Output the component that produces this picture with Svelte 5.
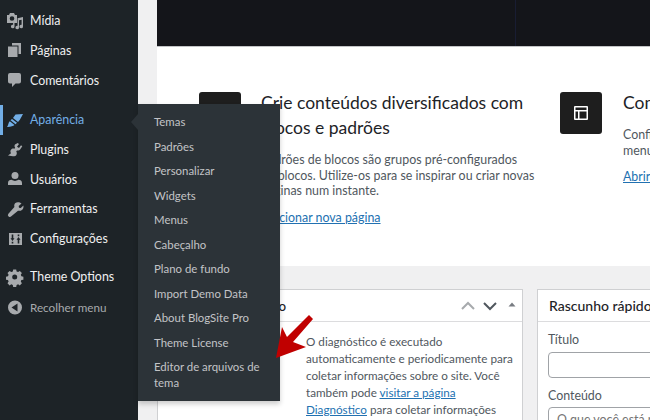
<script>
  const topItems = [
    { label: 'Mídia', icon: 'media' },
    { label: 'Páginas', icon: 'pages' },
    { label: 'Comentários', icon: 'comments' }
  ];
  const midItems = [
    { label: 'Plugins', icon: 'plugins' },
    { label: 'Usuários', icon: 'users' },
    { label: 'Ferramentas', icon: 'tools' },
    { label: 'Configurações', icon: 'settings' }
  ];
  const sub = ['Temas','Padrões','Personalizar','Widgets','Menus','Cabeçalho','Plano de fundo','Import Demo Data','About BlogSite Pro','Theme License','Editor de arquivos de tema'];
</script>

{#snippet icon(name)}
  <svg class="ico" viewBox="0 0 20 20" aria-hidden="true">
    {#if name === 'media'}
      <path fill-rule="evenodd" d="M2 4h2l1-2h4l1 2h2v8H9.500v3.500a1.800 1.800 0 1 1-1.400-1.700V12H2zM7 5.200a2.300 2.300 0 1 0 0 4.600 2.300 2.300 0 0 0 0-4.600z"/>
      <path d="M18 6v9.500a1.800 1.800 0 1 1-1.400-1.700V8.700l-2.600.6v7.200a1.800 1.800 0 1 1-1.400-1.700V7.200z"/>
    {:else if name === 'pages'}
      <path d="M7 2h9v11h-2.500V4.500H7z"/><path d="M3 5.500h9.500V16H3z"/>
    {:else if name === 'comments'}
      <path d="M5 3h9a2 2 0 0 1 2 2v6.500a2 2 0 0 1-2 2h-3.500L7 17v-3.500H5a2 2 0 0 1-2-2V5a2 2 0 0 1 2-2z"/>
    {:else if name === 'brush'}
      <path d="M10.500 4.500l7.500-.5-3 5.500-2 2.500-5-4z"/><path d="M7 9l5 3.800-1.500 1.500-5-4zM4.800 11.200l4.700 3.800C8.300 16 5 17.300 2 17c.8-1 1.200-2.500 1.500-3.500.2-1 .6-1.700 1.300-2.300z"/>
    {:else if name === 'plugins'}
      <path d="M12.700 4l1.300.9-2 2.800 2 1.400 2-2.800 1.300.9-2.200 3.200c-.7 1-2 1.400-3.100 1l-.8 1.100c.9 1.100.8 2.500 0 3.700-.6.800-2 1.200-3.400 1L3 16.500l3-2.300c-.7-1-.8-2.300 0-3.400.7-1 2-1.500 3.400-1l.8-1.100c-.8-.9-.9-2.200-.2-3.200z"/>
    {:else if name === 'users'}
      <circle cx="10" cy="6.500" r="3.500"/><path d="M3 16v-2c0-2 1.500-3.200 3.700-3.200 1 .8 2.200 1.100 3.300 1.100s2.300-.3 3.300-1.100c2.200 0 3.700 1.200 3.700 3.200v2z"/>
    {:else if name === 'tools'}
      <path d="M16.500 4.500l-2.800 2.600.3 1.700 1.800.3 2.600-2.700c.3 1.800-.1 3.300-1.200 4.300-1.200 1.100-2.700 1.400-4.200 1L6.300 17.300a1.900 1.900 0 0 1-2.900-2.500l6-6.900c-.4-1.500-.1-2.900 1-3.900 1.300-1.100 4.400-1 6.100.5z"/>
    {:else if name === 'settings'}
      <path fill-rule="evenodd" d="M4 4h13v12H4zM6.700 5.500v3.800H5.500L7.500 12l2-2.700H8.300V5.500zM6.700 12.800v1.700h1.600v-1.700zM12.700 14.500v-3.800h-1.200l2-2.700 2 2.700h-1.200v3.800zM12.700 5.500v1.700h1.600V5.500z"/>
    {:else if name === 'gear'}
      <path fill-rule="evenodd" d="M8.200 3h3l.4 2 1.500.6 1.700-1.100 2.100 2.100-1.100 1.700.6 1.500 2 .4v3l-2 .4-.6 1.500 1.100 1.700-2.100 2.100-1.700-1.100-1.500.6-.4 2h-3l-.4-2-1.500-.6-1.700 1.100-2.100-2.100 1.100-1.700-.6-1.500-2-.4v-3l2-.4.6-1.500-1.100-1.700 2.100-2.100 1.700 1.100 1.500-.6zM9.700 8a2.500 2.500 0 1 0 0 5 2.500 2.500 0 0 0 0-5z" transform="translate(0 -.500)"/>
    {:else if name === 'collapse'}
      <path fill-rule="evenodd" d="M10 3.500a7 7 0 1 1 0 14 7 7 0 0 1 0-14zM12.500 6.500L6.500 10.500l6 4z"/>
    {/if}
  </svg>
{/snippet}

<div class="screen">
  <aside class="side">
    <nav class="menu">
      {#each topItems as it}
        <div class="item">{@render icon(it.icon)}<span>{it.label}</span></div>
      {/each}
      <div class="item current">{@render icon('brush')}<span>Aparência</span></div>
      {#each midItems as it}
        <div class="item">{@render icon(it.icon)}<span>{it.label}</span></div>
      {/each}
      <div class="item opts">{@render icon('gear')}<span>Theme Options</span></div>
      <div class="item collapse">{@render icon('collapse')}<span>Recolher menu</span></div>
    </nav>
  </aside>

  <main class="main">
    <div class="welcome">
      <div class="hero"></div>
      <div class="cols">
        <section class="col first">
          <div class="tile"></div>
          <div class="coltext">
            <h2>Crie conteúdos diversificados com blocos e padrões</h2>
            <p>Padrões de blocos são grupos pré-configurados<br />de blocos. Utilize-os para se inspirar ou criar novas<br />páginas num instante.</p>
            <a href="#a">Adicionar nova página</a>
          </div>
        </section>
        <section class="col second">
          <div class="tile">
            <svg viewBox="0 0 24 24" width="24" height="24" aria-hidden="true"><path fill="#fff" fill-rule="evenodd" d="M18 5H6a1 1 0 0 0-1 1v12a1 1 0 0 0 1 1h12a1 1 0 0 0 1-1V6a1 1 0 0 0-1-1zM6.500 6.500h11v2.500h-11zm0 4h2.500v7H6.500zm4 7v-7h7v7z"/></svg>
          </div>
          <div class="coltext">
            <h2>Comece a personalizar</h2>
            <p>Configure o logotipo do site, cabeçalho,<br />menus e mais no personalizador.</p>
            <a href="#b">Abrir o personalizador</a>
          </div>
        </section>
      </div>
    </div>

    <div class="boxes">
      <section class="box health">
        <header>
          <h3>Diagnóstico do sítio</h3>
          <div class="ctrls">
            <svg viewBox="0 0 20 20" width="20" height="20" aria-hidden="true"><path class="faint" d="M4 13l6-6 6 6"/></svg>
            <svg viewBox="0 0 20 20" width="20" height="20" aria-hidden="true"><path d="M4 7l6 6 6-6"/></svg>
            <svg viewBox="0 0 20 20" width="20" height="20" aria-hidden="true"><path class="tri" d="M6.500 10.500l3.500-4 3.500 4z"/></svg>
          </div>
        </header>
        <div class="body">
          <p>O diagnóstico é executado automaticamente e periodicamente para coletar informações sobre o site. Você também pode <a href="#c">visitar a página Diagnóstico</a> para coletar informações</p>
        </div>
      </section>
      <section class="box draft">
        <header><h3>Rascunho rápido</h3></header>
        <div class="body">
          <label for="t">Título</label>
          <input id="t" />
          <label for="c">Conteúdo</label>
          <textarea id="c" placeholder="O que você está pensando?"></textarea>
        </div>
      </section>
    </div>
  </main>

  <div class="flyout">
    {#each sub as s}<div class="subitem">{s}</div>{/each}
  </div>

  <svg class="arrow" viewBox="0 0 50 50" width="50" height="50" aria-hidden="true">
    <path fill="#c00000" d="M39 5l4 4-20 23 13 5-30 11 6-31 5 10z"/>
  </svg>
</div>

<style>
  :global(body) { margin: 0; background: #f0f0f1; }
  .screen {
    position: relative;
    width: 650px;
    height: 420px;
    overflow: hidden;
    display: flex;
    background: #f0f0f1;
    font-family: Lato, "Noto Sans", sans-serif;
    font-size: 13px;
    color: #3c434a;
  }
  .side { flex: 0 0 138px; background: #1d2327; }
  .menu { display: flex; flex-direction: column; padding-top: 6px; }
  .item {
    height: 29.700px;
    display: flex;
    align-items: center;
    gap: 5px;
    padding-left: 5px;
    color: #f0f0f1;
    font-size: 12.400px;
  }
  .ico { width: 20px; height: 20px; fill: #a7aaad; flex: none; }
  .current { color: #72aee6; margin-top: 9.900px; box-shadow: inset 3px 0 0 #72aee6; }
  .current .ico { fill: #72aee6; }
  .opts { margin-top: 8.650px; }
  .collapse { color: #a7aaad; font-size: 11.700px; }

  .main { flex: 1; min-width: 0; padding-left: 19px; }
  .welcome { background: #fff; height: 266px; overflow: hidden; }
  .hero {
    height: 46px;
    background: linear-gradient(90deg, transparent 358px, #191d33 358px, #191d33 359px, transparent 359px), #14151a;
    border-bottom: 1px solid #c3c4c7;
  }
  .cols { display: flex; padding: 45px 0 0 42px; gap: 27px; }
  .col { display: flex; gap: 20px; flex: none; }
  .first { width: 334px; }
  .second { width: 320px; gap: 21px; }
  .tile { flex: 0 0 42px; height: 42px; background: #1e1e1e; border-radius: 3px; display: flex; align-items: center; justify-content: center; }
  .coltext { flex: 1; min-width: 0; margin-top: -2.500px; }
  h2 { margin: 0 0 12.500px; font-size: 17.500px; line-height: 25px; font-weight: 400; color: #1d2327; }
  .col p { margin: 0 0 10px; font-size: 12.400px; line-height: 15.500px; color: #50575e; white-space: nowrap; }
  a { color: #2271b1; }
  .col a { font-size: 12.400px; }
  .boxes { display: flex; gap: 14px; padding-top: 23px; }
  .box { background: #fff; border: 1px solid #cfd0d2; flex: none; }
  .health { width: 364px; height: 200px; }
  .draft { width: 200px; height: 200px; }
  header { height: 31px; border-bottom: 1px solid #dcdcde; display: flex; align-items: center; justify-content: space-between; padding-left: 11px; }
  h3 { margin: 0; font-size: 14px; font-weight: 500; color: #1d2327; white-space: nowrap; }
  .health h3 { font-size: 13.400px; }
  .ctrls { display: flex; gap: 2px; }
  .ctrls path { fill: none; stroke: #50575e; stroke-width: 2; }
  .ctrls path.faint { stroke: #a7aaad; }
  .ctrls path.tri { fill: #787c82; stroke: none; }
  .body { padding: 10px 10px; }
  .health .body { padding: 11px 8px 11px 148px; }
  .health p { margin: 0; font-size: 11.700px; line-height: 17px; color: #50575e; }
  label { display: block; font-size: 12.400px; color: #50575e; line-height: 16px; }
  input { display: block; box-sizing: border-box; width: 100%; height: 26px; margin: 4px 0 10px; border: 1px solid #a0a3a7; border-radius: 4px; background: #fff; }
  textarea { display: block; box-sizing: border-box; width: 100%; height: 80px; margin-top: 3px; border: 1px solid #a0a3a7; border-radius: 4px; padding: 4px 8px; font: inherit; font-size: 12.400px; resize: none; }

  .flyout {
    position: absolute;
    left: 138px;
    top: 104px;
    width: 142px;
    height: 297px;
    box-sizing: border-box;
    padding-top: 6px;
    background: #2c3338;
    box-shadow: 0 3px 5px rgba(0,0,0,.2);
  }
  .flyout::before {
    content: "";
    position: absolute;
    left: -7px;
    top: 10px;
    border: 8px solid transparent;
    border-left: 0;
    border-right: 7px solid #2c3338;
  }
  .subitem { padding: 4.250px 12px 4.250px 16px; font-size: 11.400px; line-height: 16px; color: #c3c4c7; }
  .arrow { position: absolute; left: 270px; top: 310px; }
</style>
